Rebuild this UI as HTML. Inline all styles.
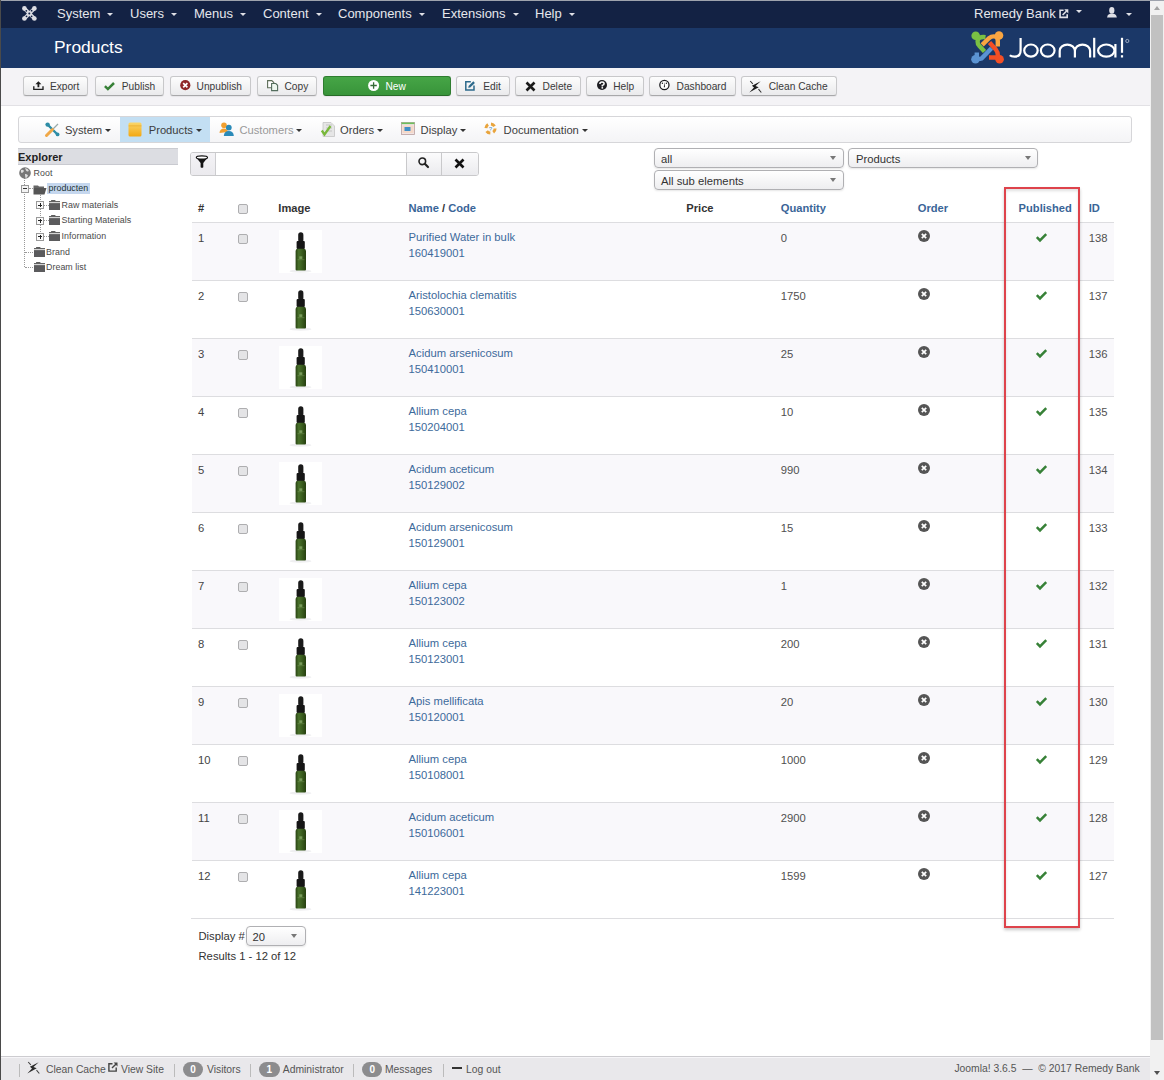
<!DOCTYPE html><html><head><meta charset="utf-8"><style>
*{box-sizing:border-box;margin:0;padding:0}
html,body{width:1164px;height:1080px;overflow:hidden;background:#fff;font-family:"Liberation Sans",sans-serif;color:#333}
.a{position:absolute}
svg{display:block;overflow:visible}
#topline{left:0;top:0;width:1164px;height:1px;background:#9ea3ad}
#leftline{left:0;top:0;width:1px;height:1080px;background:#4a4a4a}
#nav{left:1px;top:1px;width:1149px;height:27px;background:#132244}
#hdr{left:1px;top:28px;width:1149px;height:40px;background:#1b3868}
.nv{position:absolute;top:6px;color:#e6e7ec;font-size:13px;line-height:16px;white-space:nowrap}
.caret{display:inline-block;width:0;height:0;border-left:3px solid transparent;border-right:3px solid transparent;border-top:3px solid #dfe0e6;vertical-align:middle;margin-left:7px;margin-top:-1px}
#title{left:54px;top:37px;color:#fff;font-size:17.4px;line-height:20px}
#tbar{left:1px;top:68px;width:1149px;height:38px;background:#f4f3f6;border-bottom:1px solid #e2e1e5}
.btn{position:absolute;top:76px;height:20px;border:1px solid #c8c8ca;border-bottom-color:#a8a8aa;border-radius:3px;background:linear-gradient(#fdfdfd,#eaeaec);box-shadow:0 1px 1px rgba(0,0,0,.06)}
.bt{position:absolute;top:80px;font-size:10.2px;line-height:14px;color:#3a3a3a;white-space:nowrap}
.bi{position:absolute}
#sub{left:18px;top:115.5px;width:1114px;height:27.5px;border:1px solid #d6d6d9;border-radius:3px;background:linear-gradient(#fff,#f4f4f6)}
#subact{left:120px;top:116.5px;width:90px;height:25.5px;background:#c3dff3}
.sm{position:absolute;top:122px;font-size:11.2px;line-height:16px;color:#3d3d3d;white-space:nowrap}
.cr2{display:inline-block;width:0;height:0;border-left:3px solid transparent;border-right:3px solid transparent;border-top:3px solid #333;vertical-align:middle;margin-left:3px;margin-top:-1px}
#exphd{left:18px;top:148px;width:160px;height:17px;background:#dcdde2;border-top:1px solid #cbccd1;border-bottom:1px solid #c9cad0}
#exphdt{left:18px;top:149px;font-size:11px;font-weight:bold;line-height:16px;color:#222}
.tr{position:absolute;font-size:8.85px;line-height:12px;color:#4a4a4a;letter-spacing:0.05px;white-space:nowrap}
.th{position:absolute;top:200px;font-size:11.15px;font-weight:bold;line-height:16px;color:#333;white-space:nowrap}
.thl{color:#3a6598}
.row{position:absolute;left:192px;width:922px;height:58px;border-top:1px solid #dddde0}
.td{position:absolute;font-size:11.25px;line-height:16px;color:#333;white-space:nowrap}
.lnk{color:#3d6a9b}
.cb{position:absolute;width:10px;height:10px;border:1px solid #aeaeb0;border-radius:2px;background:#e4e4e6}
#scroll{left:1150px;top:1px;width:14px;height:1079px;background:#f1f1f1}
#thumb{left:1151px;top:15px;width:12px;height:1025px;background:#c1c1c1}
#foot{left:1px;top:1056px;width:1149px;height:24px;background:#e9e8eb;border-top:1px solid #cdccd0;box-shadow:inset 0 1px 0 #f6f5f8}
.ft{position:absolute;top:1062.6px;font-size:10.35px;line-height:13px;color:#555;white-space:nowrap}
.badge{position:absolute;top:1061.5px;height:15px;border-radius:7.5px;background:#8c8c8e;color:#fff;font-size:10px;font-weight:bold;line-height:15px;text-align:center}
.sep{position:absolute;top:1064px;width:1px;height:13px;background:#bbb}
.sel{position:absolute;height:20px;border:1px solid #b0b0b3;border-radius:4px;background:linear-gradient(#fff,#eeeef0);box-shadow:0 1px 2px rgba(0,0,0,.1)}
.selt{position:absolute;font-size:11.25px;line-height:16px;color:#333;white-space:nowrap}
.sela{position:absolute;width:0;height:0;border-left:3px solid transparent;border-right:3px solid transparent;border-top:4px solid #777}
</style></head><body>
<div id="topline" class="a"></div><div id="nav" class="a"></div><div id="hdr" class="a"></div><div id="leftline" class="a"></div>
<svg class="a" style="left:22px;top:6px" width="15" height="15" viewBox="0 0 15 15"><g fill="#dcdde3"><path d="M2.5 2.5 L12.3 12.4" stroke="#dcdde3" stroke-width="3.6"/><path d="M12.3 2.5 L2.5 12.4" stroke="#dcdde3" stroke-width="3.6"/><circle cx="2.4" cy="2.4" r="2.3"/><circle cx="12.4" cy="2.4" r="2.3"/><circle cx="2.4" cy="12.5" r="2.3"/><circle cx="12.4" cy="12.5" r="2.3"/></g><g fill="#132244"><circle cx="4.3" cy="4.8" r="0.9"/><circle cx="9.6" cy="4.7" r="0.9"/><circle cx="4.5" cy="10.3" r="0.9"/><circle cx="9.6" cy="10.3" r="0.9"/><circle cx="7.3" cy="7.5" r="1"/></g></svg>
<div class="nv" style="left:57px">System<span class="caret"></span></div>
<div class="nv" style="left:130px">Users<span class="caret"></span></div>
<div class="nv" style="left:194px">Menus<span class="caret"></span></div>
<div class="nv" style="left:263px">Content<span class="caret"></span></div>
<div class="nv" style="left:338px">Components<span class="caret"></span></div>
<div class="nv" style="left:442px">Extensions<span class="caret"></span></div>
<div class="nv" style="left:535px">Help<span class="caret"></span></div>
<div class="nv" style="left:974px">Remedy Bank</div>
<svg class="a" style="left:1058.5px;top:8.8px" width="10" height="10" viewBox="0 0 10 10"><path d="M4.6 1.2 H1.1 V8.4 H8.2 V5.2" fill="none" stroke="#dfe0e6" stroke-width="1.6"/><path d="M3.6 6 L7.6 2" stroke="#dfe0e6" stroke-width="1.6"/><path d="M5.2 0.3 H9.3 V4.4Z" fill="#dfe0e6"/></svg>
<div class="a" style="left:1076.3px;top:10.3px;width:0;height:0;border-left:3.5px solid transparent;border-right:3.5px solid transparent;border-top:3.7px solid #dfe0e6"></div>
<svg class="a" style="left:1106px;top:7px" width="12" height="11" viewBox="0 0 12 11"><ellipse cx="5.8" cy="3.4" rx="2.6" ry="3.3" fill="#dfe0e6"/><path d="M1 10.6 Q1.2 7.6 4 6.8 H7.6 Q10.6 7.6 10.8 10.6Z" fill="#dfe0e6"/></svg>
<div class="a" style="left:1126px;top:13px;width:0;height:0;border-left:3.2px solid transparent;border-right:3.2px solid transparent;border-top:3.4px solid #dfe0e6"></div>
<div id="title" class="a">Products</div>
<svg class="a" style="left:968px;top:28px" width="40" height="38" viewBox="0 0 40 38">
<g fill="none" stroke-width="4.4">
<path d="M8.8 24.5 V28 Q9 32 13.5 30.5 L23.5 20.3" stroke="#5b93d3"/>
<circle cx="7.5" cy="31.3" r="4.3" fill="#5b93d3" stroke="none"/>
<path d="M17.5 9.2 Q9.6 8.3 9.6 13.5 Q9.6 16.2 11 17.5 L16.5 23.5" stroke="#7ac143"/>
<circle cx="7.7" cy="7.7" r="4.3" fill="#7ac143" stroke="none"/>
<path d="M21.5 14.5 L27.8 21.5 Q29.8 24 29.8 27 V29.5 H21" stroke="#f44f25"/>
<circle cx="31.6" cy="31.2" r="4.3" fill="#f44f25" stroke="none"/>
<path d="M14.2 16.8 L21 10.2 Q24 7.8 27.5 8.6 Q29.8 9.5 29.8 13 V18.5" stroke="#f9a541"/>
<circle cx="31" cy="7.5" r="4.3" fill="#f9a541" stroke="none"/>
</g></svg>
<svg class="a" style="left:1005px;top:33px" width="130" height="30" viewBox="1005 33 130 30"><g fill="none" stroke="#fff" stroke-width="2.2">
<path d="M1020.6 38 V50.5 Q1020.6 56.6 1014.6 56.6 Q1011.2 56.6 1009.8 55.2"/>
<ellipse cx="1030.95" cy="50.55" rx="6.75" ry="6.05"/>
<ellipse cx="1047.7" cy="50.55" rx="6.85" ry="6.05"/>
<path d="M1059.7 57.5 V50.8 A7.6 6.2 0 0 1 1074.9 50.8 V57.5 M1074.9 50.8 A7.6 6.2 0 0 1 1090.1 50.8 V57.5"/>
<path d="M1094.2 37.8 V57.5"/>
<ellipse cx="1106.3" cy="50.55" rx="8.2" ry="6.05"/>
<path d="M1115.4 44 V57.5"/>
<path d="M1122 37.8 V52.8"/>
<circle cx="1127.3" cy="41" r="1.6" stroke-width="0.7" stroke="#cfd6e4"/>
</g><rect x="1120.9" y="55.2" width="2.2" height="2.3" fill="#fff"/></svg>
<div id="tbar" class="a"></div>
<div class="btn" style="left:23.4px;width:65.0px"></div>
<div class="bt" style="left:49.9px">Export</div>
<div class="bi" style="left:32.6px;top:81px"><svg width="12" height="10" viewBox="0 0 12 10"><path d="M5.4 0.2 L8.4 3.3 H6.3 V6.3 H4.5 V3.3 H2.4Z" fill="#1e1e1e"/><path d="M0.8 5.2 V8.4 H10 V5.2" fill="none" stroke="#1e1e1e" stroke-width="1.35"/></svg></div>
<div class="btn" style="left:94.5px;width:69.69999999999999px"></div>
<div class="bt" style="left:121.8px">Publish</div>
<div class="bi" style="left:104px;top:82px"><svg width="11" height="9" viewBox="0 0 11 9"><path d="M0.9 4.1 L3.9 7.1 L10 1" fill="none" stroke="#378137" stroke-width="2.5"/></svg></div>
<div class="btn" style="left:169.8px;width:81.69999999999999px"></div>
<div class="bt" style="left:196.6px">Unpublish</div>
<div class="bi" style="left:179.7px;top:80px"><svg width="11" height="11" viewBox="0 0 11 11"><circle cx="5.3" cy="5.2" r="5.1" fill="#8f2626"/><path d="M3.2 3.1 L7.4 7.3 M7.4 3.1 L3.2 7.3" stroke="#fff" stroke-width="1.7"/></svg></div>
<div class="btn" style="left:257.4px;width:59.80000000000001px"></div>
<div class="bt" style="left:284.5px">Copy</div>
<div class="bi" style="left:266.6px;top:79.5px"><svg width="12" height="12" viewBox="0 0 12 12"><path d="M0.6 0.6 H4.8 L6.8 2.6 V7.7 H0.6Z" fill="#fff" stroke="#5e6e58" stroke-width="1.1"/><path d="M4.6 3.5 H8.8 L10.6 5.3 V10.6 H4.6Z" fill="#eef8f0" stroke="#546e5e" stroke-width="1.1"/></svg></div>
<div class="btn" style="left:322.9px;width:127.80000000000001px;background:linear-gradient(#46a546,#38943a);border-color:#2f7d30;border-bottom-color:#276b28"></div>
<div class="bt" style="left:385.5px;color:#fff">New</div>
<div class="bi" style="left:367.9px;top:80px"><svg width="12" height="12" viewBox="0 0 12 12"><circle cx="5.6" cy="5.5" r="5.5" fill="#fff"/><path d="M5.6 2.2 V8.8 M2.4 5.5 H8.8" stroke="#356b35" stroke-width="1.3"/></svg></div>
<div class="btn" style="left:455.5px;width:54.10000000000002px"></div>
<div class="bt" style="left:483.3px">Edit</div>
<div class="bi" style="left:465.4px;top:81px"><svg width="11" height="10" viewBox="0 0 11 10"><path d="M5.8 0.8 H0.8 V9 H9 V4.4" fill="none" stroke="#2d6a8c" stroke-width="1.5"/><path d="M3.2 6.8 L3.6 5 L8.3 0.3 L9.9 1.9 L5.2 6.6Z" fill="#2d6a8c"/></svg></div>
<div class="btn" style="left:514.7px;width:66.5px"></div>
<div class="bt" style="left:542.6px">Delete</div>
<div class="bi" style="left:525px;top:80.5px"><svg width="11" height="11" viewBox="0 0 11 11"><path d="M1.5 1.5 L9.5 9.5 M9.5 1.5 L1.5 9.5" stroke="#1a1a1a" stroke-width="2.6"/></svg></div>
<div class="btn" style="left:586.4px;width:57.200000000000045px"></div>
<div class="bt" style="left:613.2px">Help</div>
<div class="bi" style="left:597px;top:80px"><svg width="11" height="11" viewBox="0 0 11 11"><circle cx="5" cy="5" r="5" fill="#1e1e22"/><path d="M2.9 3.9 Q2.9 2 5 2 Q7.1 2 7.1 3.7 Q7.1 4.9 5.3 5.4 V6.4" fill="none" stroke="#fff" stroke-width="1.5"/><rect x="4.5" y="7.1" width="1.6" height="1.5" fill="#fff"/></svg></div>
<div class="btn" style="left:648.8px;width:87.10000000000002px"></div>
<div class="bt" style="left:676.6px">Dashboard</div>
<div class="bi" style="left:659px;top:80px"><svg width="11" height="11" viewBox="0 0 11 11"><circle cx="5.4" cy="5" r="4.6" fill="#fff" stroke="#1e1e22" stroke-width="1.3"/><path d="M5.4 2 L6 7.3 H4.8Z" fill="#1e1e22"/><circle cx="3.4" cy="3.3" r="0.7" fill="#1e1e22"/><circle cx="7.4" cy="3.3" r="0.7" fill="#1e1e22"/></svg></div>
<div class="btn" style="left:741.3px;width:96.20000000000005px"></div>
<div class="bt" style="left:768.7px">Clean Cache</div>
<div class="bi" style="left:748px;top:78.5px"><svg width="14" height="15" viewBox="0 0 14 15"><path d="M12.7 2.3 L7.5 7.0 L10.7 8.3 L1.3 13.4 L6.0 8.6 L3.9 6.8 Z" fill="#1c1c1c"/><path d="M2.2 2 L4.8 4.8 M10.5 10.2 L13.3 13.5" stroke="#333" stroke-width="1.1"/></svg></div>
<div id="sub" class="a"></div><div id="subact" class="a"></div>
<div class="a" style="left:44.8px;top:121.5px"><svg width="15" height="15" viewBox="0 0 15 15"><path d="M2.5 2.5 L12.5 12.5" stroke="#2e8da6" stroke-width="2.4" stroke-linecap="round"/><circle cx="2.6" cy="2.6" r="2.2" fill="#2e8da6"/><circle cx="12.6" cy="12.4" r="1.9" fill="#2e8da6"/><path d="M8 7 L13 2" stroke="#9aa" stroke-width="1.2"/><path d="M1.5 13.5 L7.5 7.5" stroke="#f0a848" stroke-width="3" stroke-linecap="round"/></svg></div>
<div class="sm" style="left:64.9px;color:#3d3d3d">System<span class="cr2"></span></div>
<div class="a" style="left:128px;top:121.5px"><svg width="14" height="15" viewBox="0 0 14 15"><defs><linearGradient id="pg" x1="0" y1="0" x2="0" y2="1"><stop offset="0" stop-color="#fbd66a"/><stop offset="1" stop-color="#f2a814"/></linearGradient></defs><rect x="0.5" y="0.5" width="13" height="14" rx="1.5" fill="url(#pg)"/><rect x="0.5" y="3.5" width="13" height="0.8" fill="#e09a10" opacity=".6"/></svg></div>
<div class="sm" style="left:148.7px;color:#3d3d3d">Products<span class="cr2"></span></div>
<div class="a" style="left:218.8px;top:121.5px"><svg width="15" height="14" viewBox="0 0 15 14"><circle cx="5" cy="3.2" r="2.8" fill="#f2a030"/><path d="M0.5 11 Q0.8 6.5 5 6.5 Q8.5 6.5 9 10Z" fill="#f2a030"/><circle cx="9.8" cy="5.6" r="2.9" fill="#2a8ab8"/><path d="M4.8 14 Q5.2 9 9.8 9 Q14.5 9 14.8 14Z" fill="#2a8ab8"/></svg></div>
<div class="sm" style="left:239.4px;color:#999">Customers<span class="cr2"></span></div>
<div class="a" style="left:320.6px;top:121.5px"><svg width="14" height="15" viewBox="0 0 14 15"><path d="M2 0.5 H10 L13.5 4 V14.5 H2Z" fill="#e6e6e6" stroke="#c4c4c4" stroke-width="0.8"/><path d="M5 3 H11 M5 6 H11 M5 9 H11" stroke="#bbb" stroke-width="0.8"/><path d="M0.8 8.5 L3.5 12.5 L9.5 4" fill="none" stroke="#78b83a" stroke-width="2.3"/></svg></div>
<div class="sm" style="left:340px;color:#3d3d3d">Orders<span class="cr2"></span></div>
<div class="a" style="left:401px;top:121.5px"><svg width="14" height="13" viewBox="0 0 14 13"><rect x="0.5" y="0.5" width="13" height="12" fill="#f2e4e4" stroke="#b9a0a0" stroke-width="0.8"/><rect x="0.5" y="0.5" width="13" height="1.6" fill="#6cbf5c"/><rect x="1.5" y="3.5" width="11" height="7.5" fill="#f4d8c8"/><rect x="3.5" y="5" width="6" height="4" fill="#3f8fc8"/></svg></div>
<div class="sm" style="left:420.6px;color:#3d3d3d">Display<span class="cr2"></span></div>
<div class="a" style="left:484.3px;top:121.5px"><svg width="13" height="13" viewBox="0 0 13 13"><circle cx="6.5" cy="6.5" r="4.6" fill="none" stroke="#e9a43c" stroke-width="3" stroke-dasharray="4.2 3"/><text x="6.5" y="8.6" font-size="6" text-anchor="middle" fill="#4a90c0" font-family="Liberation Sans">?</text></svg></div>
<div class="sm" style="left:503.6px;color:#3d3d3d">Documentation<span class="cr2"></span></div>
<div id="exphd" class="a"></div><div id="exphdt" class="a">Explorer</div>
<div class="a" style="left:24px;top:178px;width:0;height:89px;border-left:1px dotted #999"></div>
<div class="a" style="left:40px;top:195px;width:0;height:41px;border-left:1px dotted #999"></div>
<div class="a" style="left:25px;top:252px;width:8px;height:0;border-top:1px dotted #999"></div>
<div class="a" style="left:25px;top:267px;width:8px;height:0;border-top:1px dotted #999"></div>
<div class="a" style="left:44px;top:204.5px;width:5px;height:0;border-top:1px dotted #999"></div>
<div class="a" style="left:44px;top:220px;width:5px;height:0;border-top:1px dotted #999"></div>
<div class="a" style="left:44px;top:236px;width:5px;height:0;border-top:1px dotted #999"></div>
<div class="a" style="left:29px;top:188px;width:4px;height:0;border-top:1px dotted #999"></div>
<svg class="a" style="left:18.5px;top:166.5px" width="12" height="12" viewBox="0 0 12 12"><circle cx="6" cy="6" r="5.8" fill="#777"/><path d="M2 3 Q4 2 5 4 Q4 6 2.5 6 Q1.5 5 2 3Z M6 1 Q9 1.5 10 4 Q8 5 7 3.5Z M6 7 Q8 6.5 9 8.5 Q8 11 6.5 11 Q6 9 6 7Z" fill="#ddd"/></svg>
<div class="tr" style="left:33.6px;top:166.5px">Root</div>
<div class="a" style="left:20.5px;top:184.5px;width:8px;height:8px;border:1px solid #999;background:#f4f4f4"></div><div class="a" style="left:22.5px;top:188px;width:4px;height:1px;background:#333"></div>
<svg class="a" style="left:33px;top:183.5px" width="14" height="11" viewBox="0 0 14 11"><path d="M0.5 1.5 H5 L6 2.5 H11 V4 H0.5Z" fill="#666"/><path d="M0.5 4 H13.5 L11.5 10.5 H0.5Z" fill="#555"/></svg>
<div class="a" style="left:47px;top:183px;width:43px;height:11px;background:#c5d7ee"></div>
<div class="tr" style="left:48.5px;top:182px;color:#233">producten</div>
<div class="a" style="left:36px;top:201.0px;width:8px;height:8px;border:1px solid #999;background:#fafafa"></div><div class="a" style="left:38px;top:204.5px;width:4px;height:1px;background:#222"></div><div class="a" style="left:39.5px;top:203.0px;width:1px;height:4px;background:#222"></div>
<svg class="a" style="left:49px;top:199.7px" width="11" height="10" viewBox="0 0 11 10"><rect x="2" y="0" width="4.5" height="1.2" rx="0.5" fill="#5e5e5e"/><rect x="0" y="1" width="11" height="1.2" fill="#646464"/><rect x="0" y="2.2" width="11" height="0.9" fill="#d2d2d2"/><rect x="0" y="3.1" width="11" height="6.9" fill="#5b5b5d"/></svg>
<div class="tr" style="left:61.5px;top:198.5px">Raw materials</div>
<div class="a" style="left:36px;top:216.5px;width:8px;height:8px;border:1px solid #999;background:#fafafa"></div><div class="a" style="left:38px;top:220.0px;width:4px;height:1px;background:#222"></div><div class="a" style="left:39.5px;top:218.5px;width:1px;height:4px;background:#222"></div>
<svg class="a" style="left:49px;top:215.2px" width="11" height="10" viewBox="0 0 11 10"><rect x="2" y="0" width="4.5" height="1.2" rx="0.5" fill="#5e5e5e"/><rect x="0" y="1" width="11" height="1.2" fill="#646464"/><rect x="0" y="2.2" width="11" height="0.9" fill="#d2d2d2"/><rect x="0" y="3.1" width="11" height="6.9" fill="#5b5b5d"/></svg>
<div class="tr" style="left:61.5px;top:214px">Starting Materials</div>
<div class="a" style="left:36px;top:232.5px;width:8px;height:8px;border:1px solid #999;background:#fafafa"></div><div class="a" style="left:38px;top:236.0px;width:4px;height:1px;background:#222"></div><div class="a" style="left:39.5px;top:234.5px;width:1px;height:4px;background:#222"></div>
<svg class="a" style="left:49px;top:231.2px" width="11" height="10" viewBox="0 0 11 10"><rect x="2" y="0" width="4.5" height="1.2" rx="0.5" fill="#5e5e5e"/><rect x="0" y="1" width="11" height="1.2" fill="#646464"/><rect x="0" y="2.2" width="11" height="0.9" fill="#d2d2d2"/><rect x="0" y="3.1" width="11" height="6.9" fill="#5b5b5d"/></svg>
<div class="tr" style="left:61.5px;top:230px">Information</div>
<svg class="a" style="left:33.5px;top:246.7px" width="11" height="10" viewBox="0 0 11 10"><rect x="2" y="0" width="4.5" height="1.2" rx="0.5" fill="#5e5e5e"/><rect x="0" y="1" width="11" height="1.2" fill="#646464"/><rect x="0" y="2.2" width="11" height="0.9" fill="#d2d2d2"/><rect x="0" y="3.1" width="11" height="6.9" fill="#5b5b5d"/></svg>
<div class="tr" style="left:46px;top:245.5px">Brand</div>
<svg class="a" style="left:33.5px;top:262.2px" width="11" height="10" viewBox="0 0 11 10"><rect x="2" y="0" width="4.5" height="1.2" rx="0.5" fill="#5e5e5e"/><rect x="0" y="1" width="11" height="1.2" fill="#646464"/><rect x="0" y="2.2" width="11" height="0.9" fill="#d2d2d2"/><rect x="0" y="3.1" width="11" height="6.9" fill="#5b5b5d"/></svg>
<div class="tr" style="left:46px;top:261px">Dream list</div>
<div class="a" style="left:190px;top:151.5px;width:289px;height:24px;border:1px solid #c9c9cb;border-radius:3px;background:#fff"></div>
<div class="a" style="left:191px;top:152.5px;width:24.5px;height:22px;background:linear-gradient(#f4f3f6,#ebeaee);border-right:1px solid #cdcdd0;border-radius:2px 0 0 2px"></div>
<svg class="a" style="left:194px;top:154px" width="16" height="16" viewBox="0 0 16 16"><path d="M2.2 3.6 Q7.9 6.6 13.6 3.6 L9.3 9 V13.2 Q8 14.3 6.6 13.2 V9Z" fill="#141414"/><ellipse cx="7.9" cy="3.5" rx="5.6" ry="1.6" fill="#fff" stroke="#141414" stroke-width="1.2"/></svg>
<div class="a" style="left:406px;top:152.5px;width:36px;height:22px;background:linear-gradient(#fbfbfc,#ebebee);border-left:1px solid #c9c9cb;border-right:1px solid #c9c9cb"></div>
<svg class="a" style="left:418px;top:157px" width="11" height="11" viewBox="0 0 11 11"><circle cx="4.3" cy="4.3" r="3.3" fill="none" stroke="#222" stroke-width="1.6"/><path d="M6.8 6.8 L10 10" stroke="#222" stroke-width="2.2" stroke-linecap="round"/></svg>
<div class="a" style="left:442px;top:152.5px;width:36px;height:22px;background:linear-gradient(#fbfbfc,#ebebee);border-radius:0 2px 2px 0"></div>
<svg class="a" style="left:453.5px;top:158px" width="11" height="11" viewBox="0 0 11 11"><path d="M1.5 1.5 L9.5 9.5 M9.5 1.5 L1.5 9.5" stroke="#111" stroke-width="2.6"/></svg>
<div class="sel" style="left:653.6px;top:148.4px;width:190.0px"></div>
<div class="selt" style="left:661.1px;top:150.9px">all</div>
<div class="sela" style="left:829.6px;top:156.4px"></div>
<div class="sel" style="left:848.4px;top:148.4px;width:190.10000000000002px"></div>
<div class="selt" style="left:855.9px;top:150.9px">Products</div>
<div class="sela" style="left:1024.5px;top:156.4px"></div>
<div class="sel" style="left:653.6px;top:170.4px;width:190.0px"></div>
<div class="selt" style="left:661.1px;top:172.9px">All sub elements</div>
<div class="sela" style="left:829.6px;top:178.4px"></div>
<div class="th" style="left:198px">#</div>
<div class="cb" style="left:238px;top:204px"></div>
<div class="th" style="left:278.3px">Image</div>
<div class="th thl" style="left:408.5px">Name <span style="color:#333">/</span> Code</div>
<div class="th" style="left:686.3px">Price</div>
<div class="th thl" style="left:780.8px">Quantity</div>
<div class="th thl" style="left:917.8px">Order</div>
<div class="th thl" style="left:1018.6px">Published</div>
<div class="th thl" style="left:1088.7px">ID</div>
<div class="row" style="top:222px;background:#f9f8fb"></div>
<div class="td" style="left:198px;top:230.3px;color:#444">1</div>
<div class="cb" style="left:238px;top:234.3px"></div>
<div class="a" style="left:278.5px;top:230px"><svg width="43" height="43" viewBox="0 0 43 43"><defs><linearGradient id="bg1" x1="0" y1="0" x2="1" y2="0"><stop offset="0" stop-color="#2a4414"/><stop offset=".3" stop-color="#48702a"/><stop offset=".6" stop-color="#3b5e1f"/><stop offset="1" stop-color="#263f10"/></linearGradient></defs><rect width="43" height="43" fill="#fff"/><ellipse cx="21.5" cy="41.2" rx="11" ry="1.6" fill="#efeff1"/><rect x="19.2" y="2.3" width="5.2" height="10" rx="2.6" fill="#1a1a1a"/><rect x="17.6" y="11" width="8.2" height="8" rx="1" fill="#151515"/><path d="M16.6 21 Q16.6 18.7 19 18.7 H24.6 Q27 18.7 27 21 V39.5 Q27 40.5 26 40.5 H17.6 Q16.6 40.5 16.6 39.5Z" fill="url(#bg1)"/><rect x="20.3" y="26.3" width="3" height="2.6" fill="#9fc080" opacity=".6"/><rect x="18.5" y="29.2" width="7" height="1" fill="#8fb070" opacity=".35"/></svg></div>
<div class="td lnk" style="left:408.5px;top:229.3px">Purified Water in bulk<br>160419001</div>
<div class="td" style="left:780.8px;top:230.3px;color:#505050">0</div>
<svg class="a" style="left:918px;top:230.3px" width="12" height="12" viewBox="0 0 12 12"><circle cx="6" cy="6" r="6" fill="#555"/><path d="M3.8 3.8 L8.2 8.2 M8.2 3.8 L3.8 8.2" stroke="#fff" stroke-width="1.7"/></svg>
<svg class="a" style="left:1036px;top:233.4px" width="11" height="9" viewBox="0 0 11 9"><path d="M0.8 4.2 L4 7.4 L10.2 1.2" fill="none" stroke="#378137" stroke-width="2.5"/></svg>
<div class="td" style="left:1088.7px;top:230.3px;color:#505050">138</div>
<div class="row" style="top:280px;background:#fff"></div>
<div class="td" style="left:198px;top:288.3px;color:#444">2</div>
<div class="cb" style="left:238px;top:292.3px"></div>
<div class="a" style="left:278.5px;top:288px"><svg width="43" height="43" viewBox="0 0 43 43"><defs><linearGradient id="bg1" x1="0" y1="0" x2="1" y2="0"><stop offset="0" stop-color="#2a4414"/><stop offset=".3" stop-color="#48702a"/><stop offset=".6" stop-color="#3b5e1f"/><stop offset="1" stop-color="#263f10"/></linearGradient></defs><rect width="43" height="43" fill="#fff"/><ellipse cx="21.5" cy="41.2" rx="11" ry="1.6" fill="#efeff1"/><rect x="19.2" y="2.3" width="5.2" height="10" rx="2.6" fill="#1a1a1a"/><rect x="17.6" y="11" width="8.2" height="8" rx="1" fill="#151515"/><path d="M16.6 21 Q16.6 18.7 19 18.7 H24.6 Q27 18.7 27 21 V39.5 Q27 40.5 26 40.5 H17.6 Q16.6 40.5 16.6 39.5Z" fill="url(#bg1)"/><rect x="20.3" y="26.3" width="3" height="2.6" fill="#9fc080" opacity=".6"/><rect x="18.5" y="29.2" width="7" height="1" fill="#8fb070" opacity=".35"/></svg></div>
<div class="td lnk" style="left:408.5px;top:287.3px">Aristolochia clematitis<br>150630001</div>
<div class="td" style="left:780.8px;top:288.3px;color:#505050">1750</div>
<svg class="a" style="left:918px;top:288.3px" width="12" height="12" viewBox="0 0 12 12"><circle cx="6" cy="6" r="6" fill="#555"/><path d="M3.8 3.8 L8.2 8.2 M8.2 3.8 L3.8 8.2" stroke="#fff" stroke-width="1.7"/></svg>
<svg class="a" style="left:1036px;top:291.4px" width="11" height="9" viewBox="0 0 11 9"><path d="M0.8 4.2 L4 7.4 L10.2 1.2" fill="none" stroke="#378137" stroke-width="2.5"/></svg>
<div class="td" style="left:1088.7px;top:288.3px;color:#505050">137</div>
<div class="row" style="top:338px;background:#f9f8fb"></div>
<div class="td" style="left:198px;top:346.3px;color:#444">3</div>
<div class="cb" style="left:238px;top:350.3px"></div>
<div class="a" style="left:278.5px;top:346px"><svg width="43" height="43" viewBox="0 0 43 43"><defs><linearGradient id="bg1" x1="0" y1="0" x2="1" y2="0"><stop offset="0" stop-color="#2a4414"/><stop offset=".3" stop-color="#48702a"/><stop offset=".6" stop-color="#3b5e1f"/><stop offset="1" stop-color="#263f10"/></linearGradient></defs><rect width="43" height="43" fill="#fff"/><ellipse cx="21.5" cy="41.2" rx="11" ry="1.6" fill="#efeff1"/><rect x="19.2" y="2.3" width="5.2" height="10" rx="2.6" fill="#1a1a1a"/><rect x="17.6" y="11" width="8.2" height="8" rx="1" fill="#151515"/><path d="M16.6 21 Q16.6 18.7 19 18.7 H24.6 Q27 18.7 27 21 V39.5 Q27 40.5 26 40.5 H17.6 Q16.6 40.5 16.6 39.5Z" fill="url(#bg1)"/><rect x="20.3" y="26.3" width="3" height="2.6" fill="#9fc080" opacity=".6"/><rect x="18.5" y="29.2" width="7" height="1" fill="#8fb070" opacity=".35"/></svg></div>
<div class="td lnk" style="left:408.5px;top:345.3px">Acidum arsenicosum<br>150410001</div>
<div class="td" style="left:780.8px;top:346.3px;color:#505050">25</div>
<svg class="a" style="left:918px;top:346.3px" width="12" height="12" viewBox="0 0 12 12"><circle cx="6" cy="6" r="6" fill="#555"/><path d="M3.8 3.8 L8.2 8.2 M8.2 3.8 L3.8 8.2" stroke="#fff" stroke-width="1.7"/></svg>
<svg class="a" style="left:1036px;top:349.4px" width="11" height="9" viewBox="0 0 11 9"><path d="M0.8 4.2 L4 7.4 L10.2 1.2" fill="none" stroke="#378137" stroke-width="2.5"/></svg>
<div class="td" style="left:1088.7px;top:346.3px;color:#505050">136</div>
<div class="row" style="top:396px;background:#fff"></div>
<div class="td" style="left:198px;top:404.3px;color:#444">4</div>
<div class="cb" style="left:238px;top:408.3px"></div>
<div class="a" style="left:278.5px;top:404px"><svg width="43" height="43" viewBox="0 0 43 43"><defs><linearGradient id="bg1" x1="0" y1="0" x2="1" y2="0"><stop offset="0" stop-color="#2a4414"/><stop offset=".3" stop-color="#48702a"/><stop offset=".6" stop-color="#3b5e1f"/><stop offset="1" stop-color="#263f10"/></linearGradient></defs><rect width="43" height="43" fill="#fff"/><ellipse cx="21.5" cy="41.2" rx="11" ry="1.6" fill="#efeff1"/><rect x="19.2" y="2.3" width="5.2" height="10" rx="2.6" fill="#1a1a1a"/><rect x="17.6" y="11" width="8.2" height="8" rx="1" fill="#151515"/><path d="M16.6 21 Q16.6 18.7 19 18.7 H24.6 Q27 18.7 27 21 V39.5 Q27 40.5 26 40.5 H17.6 Q16.6 40.5 16.6 39.5Z" fill="url(#bg1)"/><rect x="20.3" y="26.3" width="3" height="2.6" fill="#9fc080" opacity=".6"/><rect x="18.5" y="29.2" width="7" height="1" fill="#8fb070" opacity=".35"/></svg></div>
<div class="td lnk" style="left:408.5px;top:403.3px">Allium cepa<br>150204001</div>
<div class="td" style="left:780.8px;top:404.3px;color:#505050">10</div>
<svg class="a" style="left:918px;top:404.3px" width="12" height="12" viewBox="0 0 12 12"><circle cx="6" cy="6" r="6" fill="#555"/><path d="M3.8 3.8 L8.2 8.2 M8.2 3.8 L3.8 8.2" stroke="#fff" stroke-width="1.7"/></svg>
<svg class="a" style="left:1036px;top:407.4px" width="11" height="9" viewBox="0 0 11 9"><path d="M0.8 4.2 L4 7.4 L10.2 1.2" fill="none" stroke="#378137" stroke-width="2.5"/></svg>
<div class="td" style="left:1088.7px;top:404.3px;color:#505050">135</div>
<div class="row" style="top:454px;background:#f9f8fb"></div>
<div class="td" style="left:198px;top:462.3px;color:#444">5</div>
<div class="cb" style="left:238px;top:466.3px"></div>
<div class="a" style="left:278.5px;top:462px"><svg width="43" height="43" viewBox="0 0 43 43"><defs><linearGradient id="bg1" x1="0" y1="0" x2="1" y2="0"><stop offset="0" stop-color="#2a4414"/><stop offset=".3" stop-color="#48702a"/><stop offset=".6" stop-color="#3b5e1f"/><stop offset="1" stop-color="#263f10"/></linearGradient></defs><rect width="43" height="43" fill="#fff"/><ellipse cx="21.5" cy="41.2" rx="11" ry="1.6" fill="#efeff1"/><rect x="19.2" y="2.3" width="5.2" height="10" rx="2.6" fill="#1a1a1a"/><rect x="17.6" y="11" width="8.2" height="8" rx="1" fill="#151515"/><path d="M16.6 21 Q16.6 18.7 19 18.7 H24.6 Q27 18.7 27 21 V39.5 Q27 40.5 26 40.5 H17.6 Q16.6 40.5 16.6 39.5Z" fill="url(#bg1)"/><rect x="20.3" y="26.3" width="3" height="2.6" fill="#9fc080" opacity=".6"/><rect x="18.5" y="29.2" width="7" height="1" fill="#8fb070" opacity=".35"/></svg></div>
<div class="td lnk" style="left:408.5px;top:461.3px">Acidum aceticum<br>150129002</div>
<div class="td" style="left:780.8px;top:462.3px;color:#505050">990</div>
<svg class="a" style="left:918px;top:462.3px" width="12" height="12" viewBox="0 0 12 12"><circle cx="6" cy="6" r="6" fill="#555"/><path d="M3.8 3.8 L8.2 8.2 M8.2 3.8 L3.8 8.2" stroke="#fff" stroke-width="1.7"/></svg>
<svg class="a" style="left:1036px;top:465.4px" width="11" height="9" viewBox="0 0 11 9"><path d="M0.8 4.2 L4 7.4 L10.2 1.2" fill="none" stroke="#378137" stroke-width="2.5"/></svg>
<div class="td" style="left:1088.7px;top:462.3px;color:#505050">134</div>
<div class="row" style="top:512px;background:#fff"></div>
<div class="td" style="left:198px;top:520.3px;color:#444">6</div>
<div class="cb" style="left:238px;top:524.3px"></div>
<div class="a" style="left:278.5px;top:520px"><svg width="43" height="43" viewBox="0 0 43 43"><defs><linearGradient id="bg1" x1="0" y1="0" x2="1" y2="0"><stop offset="0" stop-color="#2a4414"/><stop offset=".3" stop-color="#48702a"/><stop offset=".6" stop-color="#3b5e1f"/><stop offset="1" stop-color="#263f10"/></linearGradient></defs><rect width="43" height="43" fill="#fff"/><ellipse cx="21.5" cy="41.2" rx="11" ry="1.6" fill="#efeff1"/><rect x="19.2" y="2.3" width="5.2" height="10" rx="2.6" fill="#1a1a1a"/><rect x="17.6" y="11" width="8.2" height="8" rx="1" fill="#151515"/><path d="M16.6 21 Q16.6 18.7 19 18.7 H24.6 Q27 18.7 27 21 V39.5 Q27 40.5 26 40.5 H17.6 Q16.6 40.5 16.6 39.5Z" fill="url(#bg1)"/><rect x="20.3" y="26.3" width="3" height="2.6" fill="#9fc080" opacity=".6"/><rect x="18.5" y="29.2" width="7" height="1" fill="#8fb070" opacity=".35"/></svg></div>
<div class="td lnk" style="left:408.5px;top:519.3px">Acidum arsenicosum<br>150129001</div>
<div class="td" style="left:780.8px;top:520.3px;color:#505050">15</div>
<svg class="a" style="left:918px;top:520.3px" width="12" height="12" viewBox="0 0 12 12"><circle cx="6" cy="6" r="6" fill="#555"/><path d="M3.8 3.8 L8.2 8.2 M8.2 3.8 L3.8 8.2" stroke="#fff" stroke-width="1.7"/></svg>
<svg class="a" style="left:1036px;top:523.4px" width="11" height="9" viewBox="0 0 11 9"><path d="M0.8 4.2 L4 7.4 L10.2 1.2" fill="none" stroke="#378137" stroke-width="2.5"/></svg>
<div class="td" style="left:1088.7px;top:520.3px;color:#505050">133</div>
<div class="row" style="top:570px;background:#f9f8fb"></div>
<div class="td" style="left:198px;top:578.3px;color:#444">7</div>
<div class="cb" style="left:238px;top:582.3px"></div>
<div class="a" style="left:278.5px;top:578px"><svg width="43" height="43" viewBox="0 0 43 43"><defs><linearGradient id="bg1" x1="0" y1="0" x2="1" y2="0"><stop offset="0" stop-color="#2a4414"/><stop offset=".3" stop-color="#48702a"/><stop offset=".6" stop-color="#3b5e1f"/><stop offset="1" stop-color="#263f10"/></linearGradient></defs><rect width="43" height="43" fill="#fff"/><ellipse cx="21.5" cy="41.2" rx="11" ry="1.6" fill="#efeff1"/><rect x="19.2" y="2.3" width="5.2" height="10" rx="2.6" fill="#1a1a1a"/><rect x="17.6" y="11" width="8.2" height="8" rx="1" fill="#151515"/><path d="M16.6 21 Q16.6 18.7 19 18.7 H24.6 Q27 18.7 27 21 V39.5 Q27 40.5 26 40.5 H17.6 Q16.6 40.5 16.6 39.5Z" fill="url(#bg1)"/><rect x="20.3" y="26.3" width="3" height="2.6" fill="#9fc080" opacity=".6"/><rect x="18.5" y="29.2" width="7" height="1" fill="#8fb070" opacity=".35"/></svg></div>
<div class="td lnk" style="left:408.5px;top:577.3px">Allium cepa<br>150123002</div>
<div class="td" style="left:780.8px;top:578.3px;color:#505050">1</div>
<svg class="a" style="left:918px;top:578.3px" width="12" height="12" viewBox="0 0 12 12"><circle cx="6" cy="6" r="6" fill="#555"/><path d="M3.8 3.8 L8.2 8.2 M8.2 3.8 L3.8 8.2" stroke="#fff" stroke-width="1.7"/></svg>
<svg class="a" style="left:1036px;top:581.4px" width="11" height="9" viewBox="0 0 11 9"><path d="M0.8 4.2 L4 7.4 L10.2 1.2" fill="none" stroke="#378137" stroke-width="2.5"/></svg>
<div class="td" style="left:1088.7px;top:578.3px;color:#505050">132</div>
<div class="row" style="top:628px;background:#fff"></div>
<div class="td" style="left:198px;top:636.3px;color:#444">8</div>
<div class="cb" style="left:238px;top:640.3px"></div>
<div class="a" style="left:278.5px;top:636px"><svg width="43" height="43" viewBox="0 0 43 43"><defs><linearGradient id="bg1" x1="0" y1="0" x2="1" y2="0"><stop offset="0" stop-color="#2a4414"/><stop offset=".3" stop-color="#48702a"/><stop offset=".6" stop-color="#3b5e1f"/><stop offset="1" stop-color="#263f10"/></linearGradient></defs><rect width="43" height="43" fill="#fff"/><ellipse cx="21.5" cy="41.2" rx="11" ry="1.6" fill="#efeff1"/><rect x="19.2" y="2.3" width="5.2" height="10" rx="2.6" fill="#1a1a1a"/><rect x="17.6" y="11" width="8.2" height="8" rx="1" fill="#151515"/><path d="M16.6 21 Q16.6 18.7 19 18.7 H24.6 Q27 18.7 27 21 V39.5 Q27 40.5 26 40.5 H17.6 Q16.6 40.5 16.6 39.5Z" fill="url(#bg1)"/><rect x="20.3" y="26.3" width="3" height="2.6" fill="#9fc080" opacity=".6"/><rect x="18.5" y="29.2" width="7" height="1" fill="#8fb070" opacity=".35"/></svg></div>
<div class="td lnk" style="left:408.5px;top:635.3px">Allium cepa<br>150123001</div>
<div class="td" style="left:780.8px;top:636.3px;color:#505050">200</div>
<svg class="a" style="left:918px;top:636.3px" width="12" height="12" viewBox="0 0 12 12"><circle cx="6" cy="6" r="6" fill="#555"/><path d="M3.8 3.8 L8.2 8.2 M8.2 3.8 L3.8 8.2" stroke="#fff" stroke-width="1.7"/></svg>
<svg class="a" style="left:1036px;top:639.4px" width="11" height="9" viewBox="0 0 11 9"><path d="M0.8 4.2 L4 7.4 L10.2 1.2" fill="none" stroke="#378137" stroke-width="2.5"/></svg>
<div class="td" style="left:1088.7px;top:636.3px;color:#505050">131</div>
<div class="row" style="top:686px;background:#f9f8fb"></div>
<div class="td" style="left:198px;top:694.3px;color:#444">9</div>
<div class="cb" style="left:238px;top:698.3px"></div>
<div class="a" style="left:278.5px;top:694px"><svg width="43" height="43" viewBox="0 0 43 43"><defs><linearGradient id="bg1" x1="0" y1="0" x2="1" y2="0"><stop offset="0" stop-color="#2a4414"/><stop offset=".3" stop-color="#48702a"/><stop offset=".6" stop-color="#3b5e1f"/><stop offset="1" stop-color="#263f10"/></linearGradient></defs><rect width="43" height="43" fill="#fff"/><ellipse cx="21.5" cy="41.2" rx="11" ry="1.6" fill="#efeff1"/><rect x="19.2" y="2.3" width="5.2" height="10" rx="2.6" fill="#1a1a1a"/><rect x="17.6" y="11" width="8.2" height="8" rx="1" fill="#151515"/><path d="M16.6 21 Q16.6 18.7 19 18.7 H24.6 Q27 18.7 27 21 V39.5 Q27 40.5 26 40.5 H17.6 Q16.6 40.5 16.6 39.5Z" fill="url(#bg1)"/><rect x="20.3" y="26.3" width="3" height="2.6" fill="#9fc080" opacity=".6"/><rect x="18.5" y="29.2" width="7" height="1" fill="#8fb070" opacity=".35"/></svg></div>
<div class="td lnk" style="left:408.5px;top:693.3px">Apis mellificata<br>150120001</div>
<div class="td" style="left:780.8px;top:694.3px;color:#505050">20</div>
<svg class="a" style="left:918px;top:694.3px" width="12" height="12" viewBox="0 0 12 12"><circle cx="6" cy="6" r="6" fill="#555"/><path d="M3.8 3.8 L8.2 8.2 M8.2 3.8 L3.8 8.2" stroke="#fff" stroke-width="1.7"/></svg>
<svg class="a" style="left:1036px;top:697.4px" width="11" height="9" viewBox="0 0 11 9"><path d="M0.8 4.2 L4 7.4 L10.2 1.2" fill="none" stroke="#378137" stroke-width="2.5"/></svg>
<div class="td" style="left:1088.7px;top:694.3px;color:#505050">130</div>
<div class="row" style="top:744px;background:#fff"></div>
<div class="td" style="left:198px;top:752.3px;color:#444">10</div>
<div class="cb" style="left:238px;top:756.3px"></div>
<div class="a" style="left:278.5px;top:752px"><svg width="43" height="43" viewBox="0 0 43 43"><defs><linearGradient id="bg1" x1="0" y1="0" x2="1" y2="0"><stop offset="0" stop-color="#2a4414"/><stop offset=".3" stop-color="#48702a"/><stop offset=".6" stop-color="#3b5e1f"/><stop offset="1" stop-color="#263f10"/></linearGradient></defs><rect width="43" height="43" fill="#fff"/><ellipse cx="21.5" cy="41.2" rx="11" ry="1.6" fill="#efeff1"/><rect x="19.2" y="2.3" width="5.2" height="10" rx="2.6" fill="#1a1a1a"/><rect x="17.6" y="11" width="8.2" height="8" rx="1" fill="#151515"/><path d="M16.6 21 Q16.6 18.7 19 18.7 H24.6 Q27 18.7 27 21 V39.5 Q27 40.5 26 40.5 H17.6 Q16.6 40.5 16.6 39.5Z" fill="url(#bg1)"/><rect x="20.3" y="26.3" width="3" height="2.6" fill="#9fc080" opacity=".6"/><rect x="18.5" y="29.2" width="7" height="1" fill="#8fb070" opacity=".35"/></svg></div>
<div class="td lnk" style="left:408.5px;top:751.3px">Allium cepa<br>150108001</div>
<div class="td" style="left:780.8px;top:752.3px;color:#505050">1000</div>
<svg class="a" style="left:918px;top:752.3px" width="12" height="12" viewBox="0 0 12 12"><circle cx="6" cy="6" r="6" fill="#555"/><path d="M3.8 3.8 L8.2 8.2 M8.2 3.8 L3.8 8.2" stroke="#fff" stroke-width="1.7"/></svg>
<svg class="a" style="left:1036px;top:755.4px" width="11" height="9" viewBox="0 0 11 9"><path d="M0.8 4.2 L4 7.4 L10.2 1.2" fill="none" stroke="#378137" stroke-width="2.5"/></svg>
<div class="td" style="left:1088.7px;top:752.3px;color:#505050">129</div>
<div class="row" style="top:802px;background:#f9f8fb"></div>
<div class="td" style="left:198px;top:810.3px;color:#444">11</div>
<div class="cb" style="left:238px;top:814.3px"></div>
<div class="a" style="left:278.5px;top:810px"><svg width="43" height="43" viewBox="0 0 43 43"><defs><linearGradient id="bg1" x1="0" y1="0" x2="1" y2="0"><stop offset="0" stop-color="#2a4414"/><stop offset=".3" stop-color="#48702a"/><stop offset=".6" stop-color="#3b5e1f"/><stop offset="1" stop-color="#263f10"/></linearGradient></defs><rect width="43" height="43" fill="#fff"/><ellipse cx="21.5" cy="41.2" rx="11" ry="1.6" fill="#efeff1"/><rect x="19.2" y="2.3" width="5.2" height="10" rx="2.6" fill="#1a1a1a"/><rect x="17.6" y="11" width="8.2" height="8" rx="1" fill="#151515"/><path d="M16.6 21 Q16.6 18.7 19 18.7 H24.6 Q27 18.7 27 21 V39.5 Q27 40.5 26 40.5 H17.6 Q16.6 40.5 16.6 39.5Z" fill="url(#bg1)"/><rect x="20.3" y="26.3" width="3" height="2.6" fill="#9fc080" opacity=".6"/><rect x="18.5" y="29.2" width="7" height="1" fill="#8fb070" opacity=".35"/></svg></div>
<div class="td lnk" style="left:408.5px;top:809.3px">Acidum aceticum<br>150106001</div>
<div class="td" style="left:780.8px;top:810.3px;color:#505050">2900</div>
<svg class="a" style="left:918px;top:810.3px" width="12" height="12" viewBox="0 0 12 12"><circle cx="6" cy="6" r="6" fill="#555"/><path d="M3.8 3.8 L8.2 8.2 M8.2 3.8 L3.8 8.2" stroke="#fff" stroke-width="1.7"/></svg>
<svg class="a" style="left:1036px;top:813.4px" width="11" height="9" viewBox="0 0 11 9"><path d="M0.8 4.2 L4 7.4 L10.2 1.2" fill="none" stroke="#378137" stroke-width="2.5"/></svg>
<div class="td" style="left:1088.7px;top:810.3px;color:#505050">128</div>
<div class="row" style="top:860px;background:#fff"></div>
<div class="td" style="left:198px;top:868.3px;color:#444">12</div>
<div class="cb" style="left:238px;top:872.3px"></div>
<div class="a" style="left:278.5px;top:868px"><svg width="43" height="43" viewBox="0 0 43 43"><defs><linearGradient id="bg1" x1="0" y1="0" x2="1" y2="0"><stop offset="0" stop-color="#2a4414"/><stop offset=".3" stop-color="#48702a"/><stop offset=".6" stop-color="#3b5e1f"/><stop offset="1" stop-color="#263f10"/></linearGradient></defs><rect width="43" height="43" fill="#fff"/><ellipse cx="21.5" cy="41.2" rx="11" ry="1.6" fill="#efeff1"/><rect x="19.2" y="2.3" width="5.2" height="10" rx="2.6" fill="#1a1a1a"/><rect x="17.6" y="11" width="8.2" height="8" rx="1" fill="#151515"/><path d="M16.6 21 Q16.6 18.7 19 18.7 H24.6 Q27 18.7 27 21 V39.5 Q27 40.5 26 40.5 H17.6 Q16.6 40.5 16.6 39.5Z" fill="url(#bg1)"/><rect x="20.3" y="26.3" width="3" height="2.6" fill="#9fc080" opacity=".6"/><rect x="18.5" y="29.2" width="7" height="1" fill="#8fb070" opacity=".35"/></svg></div>
<div class="td lnk" style="left:408.5px;top:867.3px">Allium cepa<br>141223001</div>
<div class="td" style="left:780.8px;top:868.3px;color:#505050">1599</div>
<svg class="a" style="left:918px;top:868.3px" width="12" height="12" viewBox="0 0 12 12"><circle cx="6" cy="6" r="6" fill="#555"/><path d="M3.8 3.8 L8.2 8.2 M8.2 3.8 L3.8 8.2" stroke="#fff" stroke-width="1.7"/></svg>
<svg class="a" style="left:1036px;top:871.4px" width="11" height="9" viewBox="0 0 11 9"><path d="M0.8 4.2 L4 7.4 L10.2 1.2" fill="none" stroke="#378137" stroke-width="2.5"/></svg>
<div class="td" style="left:1088.7px;top:868.3px;color:#505050">127</div>
<div class="a" style="left:191px;top:918px;width:923px;height:1px;background:#dddde0"></div>
<div class="a" style="left:1003.5px;top:187px;width:76.5px;height:741px;border:2px solid #de434b;box-shadow:0 2px 3px rgba(0,0,0,.22),inset 0 2px 3px rgba(0,0,0,.12)"></div>
<div class="td" style="left:198.5px;top:927.5px">Display #</div>
<div class="sel" style="left:245.5px;top:926.2px;width:60px"></div>
<div class="selt" style="left:252.4px;top:928.5px">20</div>
<div class="sela" style="left:291px;top:934px"></div>
<div class="td" style="left:198.5px;top:947.5px">Results 1 - 12 of 12</div>
<div id="scroll" class="a"></div><div id="thumb" class="a"></div>
<div class="a" style="left:1154px;top:6px;width:0;height:0;border-left:3.5px solid transparent;border-right:3.5px solid transparent;border-bottom:4px solid #a3a3a3"></div>
<div class="a" style="left:1154px;top:1071px;width:0;height:0;border-left:3.5px solid transparent;border-right:3.5px solid transparent;border-top:4px solid #505050"></div>
<div id="foot" class="a"></div>
<div class="sep" style="left:18.5px"></div>
<svg class="a" style="left:26px;top:1060px" width="14" height="15" viewBox="0 0 14 15"><path d="M12.7 2.3 L7.5 7.0 L10.7 8.3 L1.3 13.4 L6.0 8.6 L3.9 6.8 Z" fill="#2a2a2a"/><path d="M2.2 2 L4.8 4.8 M10.5 10.2 L13.3 13.5" stroke="#444" stroke-width="1.1"/></svg>
<div class="ft" style="left:46px">Clean Cache</div>
<svg class="a" style="left:107.5px;top:1061.5px" width="10" height="10" viewBox="0 0 10 10"><path d="M4.5 1.8 H0.9 V9.1 H8.2 V5.5" fill="none" stroke="#444" stroke-width="1.4"/><path d="M4 6 L8.6 1.4" stroke="#444" stroke-width="1.4"/><path d="M5.6 0.5 H9.5 V4.4Z" fill="#444"/></svg>
<div class="ft" style="left:121px">View Site</div>
<div class="sep" style="left:174px"></div>
<div class="badge" style="left:183px;width:20px">0</div><div class="ft" style="left:207px">Visitors</div>
<div class="sep" style="left:249.6px"></div>
<div class="badge" style="left:258.8px;width:21px">1</div><div class="ft" style="left:282.8px">Administrator</div>
<div class="sep" style="left:352.6px"></div>
<div class="badge" style="left:362.2px;width:20px">0</div><div class="ft" style="left:385px">Messages</div>
<div class="sep" style="left:442.8px"></div>
<div class="a" style="left:451.5px;top:1067px;width:10px;height:2px;background:#333"></div>
<div class="ft" style="left:466px">Log out</div>
<div class="ft" style="left:954.4px;top:1062px">Joomla! 3.6.5 &nbsp;&#8212;&nbsp; &#169; 2017 Remedy Bank</div>
</body></html>
